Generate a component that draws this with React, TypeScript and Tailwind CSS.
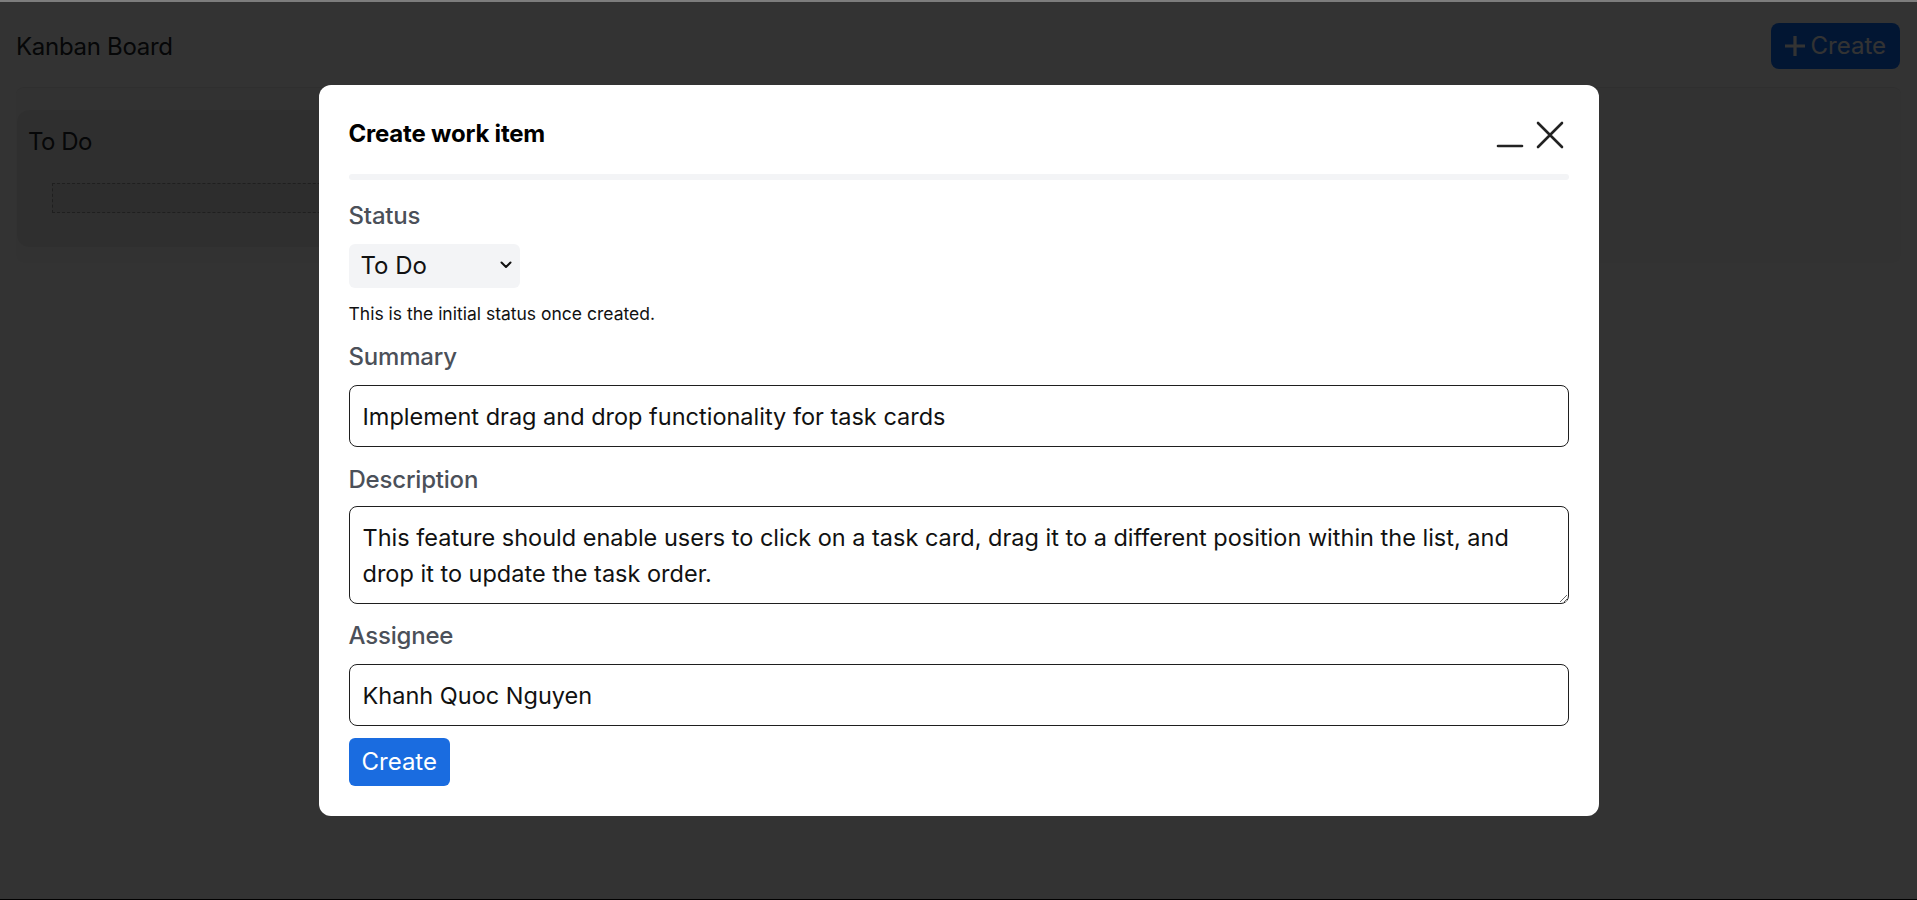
import { useState } from 'react';

const FONT = "font-['Inter','Liberation_Sans',sans-serif]";

function CloseIcon() {
  return (
    <svg width="28" height="28" viewBox="0 0 28 28" fill="none" stroke="#222" strokeWidth={2.6} strokeLinecap="round">
      <path d="M2 2L26 26M26 2L2 26" />
    </svg>
  );
}

function MinimizeIcon() {
  return (
    <svg width="28" height="28" viewBox="0 0 28 28" fill="none" stroke="#222" strokeWidth={2.6} strokeLinecap="round">
      <path d="M2 25H26" />
    </svg>
  );
}

function Board() {
  return (
    <div className="h-full bg-white">
      {/* Header */}
      <div className="flex h-[85px] items-center justify-between pt-[4px] pl-4 pr-[17px]">
        <h1 className="text-[24px] font-normal tracking-[-0.3px] text-[#212529]">Kanban Board</h1>
        <button className="-mt-[2px] flex h-[46px] items-center gap-[4px] rounded-lg bg-[#0d6efd] pl-[12px] pr-[14px] text-[24px] text-white">
          <svg width="24" height="24" viewBox="0 0 24 24" stroke="white" strokeWidth={3.2}>
            <path d="M12 2V22M2 12H22" />
          </svg>
          Create
        </button>
      </div>

      {/* Columns */}
      <div className="mx-4 rounded-lg border-t border-t-[#eaeaea] bg-[#fbfbfb] pt-[22px] pb-4">
        <div className="ml-px w-[400px] rounded-xl bg-[#ececec] pt-[16px] pb-[34px]">
          <h2 className="pl-[11px] text-[24px] leading-[32px] font-normal tracking-[-0.5px] text-[#212529]">To Do</h2>
          <div className="mt-[25px] ml-[35px] mr-4 h-[30px] border border-dashed border-[#999] bg-[#dedede]" />
        </div>
      </div>
    </div>
  );
}

export default function App() {
  const [status, setStatus] = useState('todo');
  const [summary, setSummary] = useState('Implement drag and drop functionality for task cards');
  const [description, setDescription] = useState(
    'This feature should enable users to click on a task card, drag it to a different position within the list, and drop it to update the task order.'
  );
  const [assignee, setAssignee] = useState('Khanh Quoc Nguyen');

  const label = 'block pt-[2px] text-[24px] leading-[30px] font-medium tracking-[-0.2px] text-[#4b5059]';
  const field =
    'block w-full rounded-lg border border-[#1f1f1f] bg-white px-[13px] text-[23.5px] text-[#111] outline-none';

  return (
    <div className={`${FONT} flex h-[900px] flex-col overflow-hidden`}>
      <div className="h-[2px] bg-[#7d7d7d]" />
      <div className="relative flex-1">
        <Board />

        {/* Overlay */}
        <div className="absolute inset-0 flex items-center justify-center bg-black/80">
          <div className="w-[1280px] rounded-[12px] bg-white px-[30px] pt-[31px] pb-[30px]">
            <div className="flex h-[36px] items-center justify-between">
              <h3 className="text-[24px] font-bold tracking-[-0.2px] text-black">Create work item</h3>
              <div className="mr-[5px] -mb-[2px] flex items-center gap-3">
                <MinimizeIcon />
                <CloseIcon />
              </div>
            </div>

            <div className="mt-[22px] h-[6px] rounded-full bg-[#f3f4f6]" />

            <label className={`${label} mt-[19px]`}>Status</label>
            <div className="relative mt-[13px] w-[171px]">
              <select
                value={status}
                onChange={(e) => setStatus(e.target.value)}
                className="block h-[44px] w-full appearance-none rounded-md bg-[#f3f4f6] pl-[12px] text-[24px] text-[#111] outline-none"
              >
                <option value="todo">To Do</option>
                <option value="progress">In Progress</option>
                <option value="done">Done</option>
              </select>
              <svg
                className="pointer-events-none absolute right-[8px] top-[17px]"
                width="12"
                height="8"
                viewBox="0 0 12 8"
                fill="none"
                stroke="#111"
                strokeWidth={2}
                strokeLinecap="round"
                strokeLinejoin="round"
              >
                <path d="M1.5 1.5L6 6L10.5 1.5" />
              </svg>
            </div>
            <p className="mt-[14px] text-[17.5px] leading-[24px] text-[#111]">
              This is the initial status once created.
            </p>

            <label className={`${label} mt-[14px]`}>Summary</label>
            <input
              value={summary}
              onChange={(e) => setSummary(e.target.value)}
              className={`${field} mt-[13px] h-[62px]`}
            />

            <label className={`${label} mt-[16px]`}>Description</label>
            <textarea
              value={description}
              onChange={(e) => setDescription(e.target.value)}
              className={`${field} mt-[11px] h-[98px] pt-[13px] leading-[36px]`}
            />

            <label className={`${label} mt-[15px]`}>Assignee</label>
            <input
              value={assignee}
              onChange={(e) => setAssignee(e.target.value)}
              className={`${field} mt-[13px] h-[62px]`}
            />

            <button className="mt-[12px] h-[48px] rounded-md bg-[#1a6ce0] px-[13px] text-[24px] text-white">
              Create
            </button>
          </div>
        </div>
      </div>
      <div className="h-px bg-black" />
    </div>
  );
}
